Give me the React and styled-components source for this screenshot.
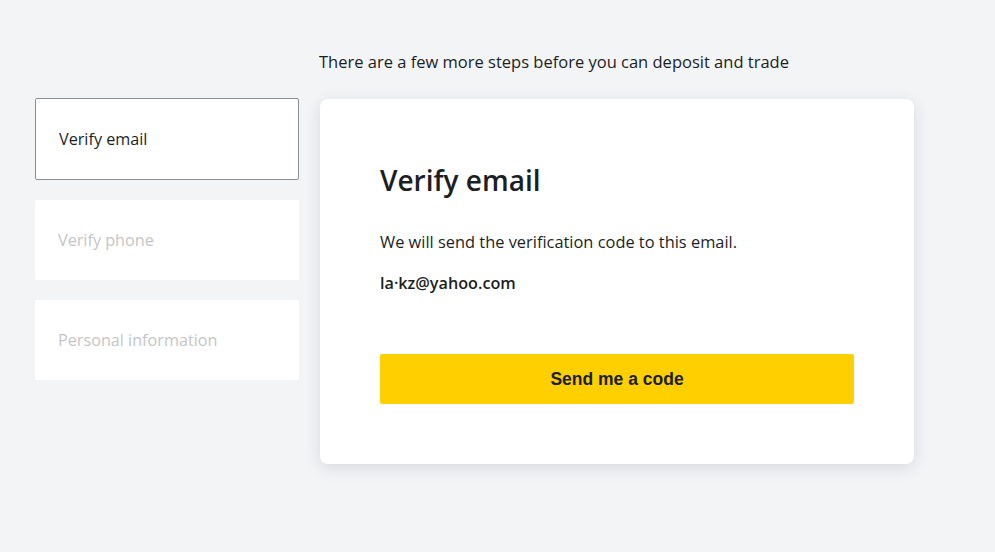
import styled, { createGlobalStyle } from "styled-components";

const GlobalStyle = createGlobalStyle`
  html, body {
    margin: 0;
    padding: 0;
    background: #f3f4f6;
    font-family: "Open Sans", "Noto Sans", sans-serif;
    color: #1b1f24;
  }
`;

const Page = styled.div`
  display: flex;
  align-items: flex-start;
  gap: 21px;
  padding: 50px 0 0 35px;
  min-height: 552px;
  box-sizing: border-box;
`;

const StepList = styled.ul`
  list-style: none;
  margin: 48px 0 0;
  padding: 0;
  width: 264px;
  display: flex;
  flex-direction: column;
  gap: 20px;
`;

const StepItem = styled.li`
  height: 80px;
  display: flex;
  align-items: center;
  padding-left: 23px;
  background: #fff;
  border-radius: 2px;
  font-size: 16.2px;
  color: ${(p) => (p.$active ? "#1b1f24" : "#c5c5c5")};
  border: ${(p) => (p.$active ? "1px solid #8d8e90" : "none")};
`;

const Main = styled.div`
  display: flex;
  flex-direction: column;
`;

const Intro = styled.p`
  margin: 0 0 25px -1px;
  font-size: 16.5px;
  line-height: 24px;
`;

const Card = styled.section`
  width: 594px;
  height: 365px;
  box-sizing: border-box;
  background: #fff;
  border-radius: 8px;
  box-shadow: 0 4px 16px rgba(20, 30, 50, 0.12);
  padding: 63px 60px 0;
  display: flex;
  flex-direction: column;
`;

const Title = styled.h1`
  margin: 0;
  font-size: 28px;
  line-height: 36px;
  font-weight: 600;
`;

const Text = styled.p`
  margin: ${(p) => (p.$strong ? "17px 0 0" : "32px 0 0")};
  font-size: ${(p) => (p.$strong ? "16.2px" : "16.4px")};
  line-height: 24px;
  font-weight: ${(p) => (p.$strong ? 600 : 400)};
`;

const Button = styled.button`
  margin-top: 59px;
  height: 50px;
  width: 474px;
  border: none;
  border-radius: 2px;
  background: #ffcf00;
  font-family: "Liberation Sans", Arial, sans-serif;
  font-weight: 700;
  font-size: 17.5px;
  color: #1b1f24;
  cursor: pointer;
`;

export default function App() {
  return (
    <>
      <GlobalStyle />
      <Page>
        <StepList>
          <StepItem $active>Verify email</StepItem>
          <StepItem>Verify phone</StepItem>
          <StepItem>Personal information</StepItem>
        </StepList>
        <Main>
          <Intro>There are a few more steps before you can deposit and trade</Intro>
          <Card>
            <Title>Verify email</Title>
            <Text>We will send the verification code to this email.</Text>
            <Text $strong>la·kz@yahoo.com</Text>
            <Button>Send me a code</Button>
          </Card>
        </Main>
      </Page>
    </>
  );
}
